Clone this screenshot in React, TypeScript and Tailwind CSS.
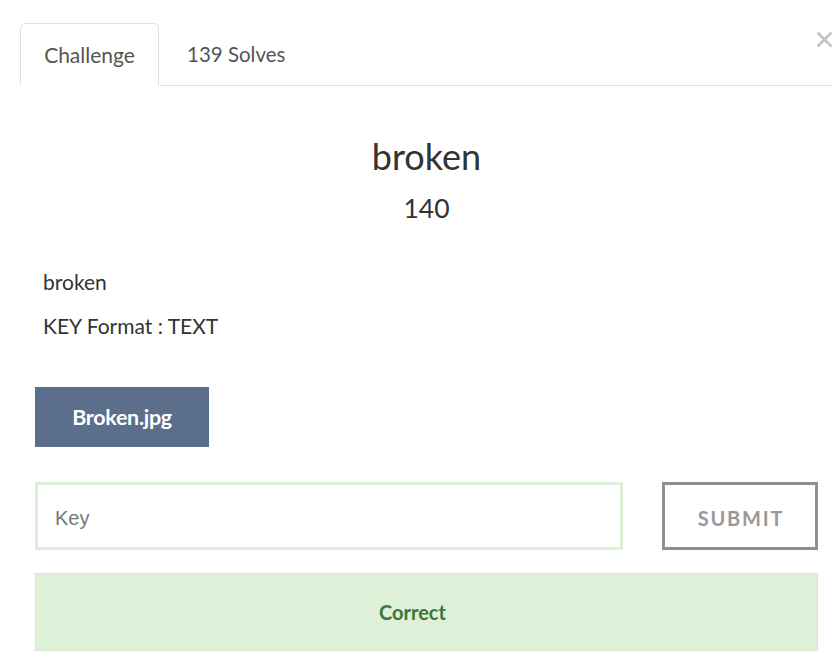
import React from "react";

export default function App() {
  return (
    <div className="relative w-[838px] h-[663px] bg-white text-[#333] font-['Lato','Noto_Sans',sans-serif] overflow-hidden">
      <div className="pt-[23px] pl-[20px] pr-[5px]">
        <div className="flex h-[63px] border-b border-[#dee2e6]">
          <div className="-mb-px h-[63px] w-[139px] flex items-center justify-center rounded-t-[5px] border border-[#dee2e6] border-b-white bg-white text-[21px] text-[#555]">
            Challenge
          </div>
          <div className="h-[62px] flex items-center pl-[28px] text-[20.5px] text-[#555]">
            139 Solves
          </div>
        </div>

        <div className="px-[15px]">
          <div className="mt-[49px] text-center text-[36px] leading-[42px] text-[#333]">broken</div>
          <div className="mt-[14px] text-center text-[26.5px] leading-[34px] text-[#333]">140</div>

          <div className="mt-[42px] px-[8px] text-[21px] leading-[30px] text-[#333]">
            <p className="mb-[14px]">broken</p>
            <p>KEY Format : TEXT</p>
          </div>

          <div className="mt-[46px]">
            <button className="h-[60px] w-[174px] bg-[#5b6f8c] text-white text-[21.5px] font-bold tracking-[-0.3px]">
              Broken.jpg
            </button>
          </div>

          <div className="mt-[35px] flex gap-[39px]">
            <div className="flex-1 h-[68px] border-[3px] border-[#dff0d8] flex items-center pl-[17px] pt-[3px]">
              <span className="text-[20px] text-[#777] font-['Liberation_Sans',sans-serif]">Key</span>
            </div>
            <button className="w-[156px] h-[68px] border-[3px] border-[#8f8f8f] text-[20px] font-bold text-[#999] tracking-[1.8px] pl-[2px] pt-[3px]">
              SUBMIT
            </button>
          </div>

          <div className="mt-[23px] h-[78px] border border-[#d6e9c6] bg-[#dff0d8] flex items-center justify-center pr-[28px] text-[20px] font-bold text-[#3c763d]">
            Correct
          </div>
        </div>
      </div>

      <svg className="absolute left-[816px] top-[31px]" width="17" height="17" viewBox="0 0 17 17">
        <path d="M1.5 1.5 L15.5 15.5 M15.5 1.5 L1.5 15.5" stroke="#c2c2c2" strokeWidth="2.6" />
      </svg>
    </div>
  );
}
